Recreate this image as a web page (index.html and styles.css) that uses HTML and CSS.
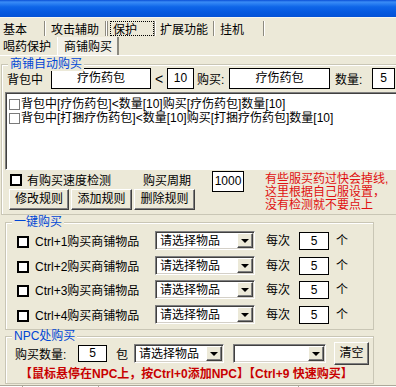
FILE: index.html
```html
<!DOCTYPE html>
<html lang="zh-CN">
<head>
  <meta charset="UTF-8" />
  <title>商铺购买</title>
  <link rel="stylesheet" href="styles.css">
</head>
<body>
  <div class="titlebar"></div>

  <div class="tabs">
    <span class="tab t1">基本</span>
    <span class="tab t2">攻击辅助</span>
    <span class="tab t3 on"><span class="focus">保护</span></span>
    <span class="tab t4">扩展功能</span>
    <span class="tab t5">挂机</span>
  </div>

  <div class="subtabs">
    <span class="sub s1">喝药保护</span>
    <span class="sub s2 on">商铺购买</span>
  </div>

  <!-- 商铺自动购买 -->
  <div class="group g-shop">
    <span class="legend">商铺自动购买</span>
    <div class="rule-row">
      <span class="lbl w-bag">背包中</span>
      <span class="edit w-item">疗伤药包</span>
      <span class="lbl w-lt">&lt;</span>
      <span class="edit w-num">10</span>
      <span class="lbl w-buy">购买:</span>
      <span class="edit w-item2">疗伤药包</span>
      <span class="lbl w-cnt">数量:</span>
      <span class="edit w-cnt-in">5</span>
    </div>

    <div class="list">
      <div class="list-item"><span class="lchk"></span>背包中[疗伤药包]&lt;数量[10]购买[疗伤药包]数量[10]</div>
      <div class="list-item"><span class="lchk"></span>背包中[打捆疗伤药包]&lt;数量[10]购买[打捆疗伤药包]数量[10]</div>
    </div>

    <div class="opts">
      <div class="opts-left">
        <div class="speed-row">
          <span class="check-wrap"><span class="chk"></span>有购买速度检测</span>
          <span class="lbl w-period">购买周期</span>
          <span class="edit w-period-in">1000</span>
        </div>
        <div class="btns">
          <span class="btn b1">修改规则</span>
          <span class="btn b2">添加规则</span>
          <span class="btn b3">删除规则</span>
        </div>
      </div>
      <div class="warn">
        <div>有些服买药过快会掉线,</div>
        <div>这里根据自己服设置，</div>
        <div>没有检测就不要点上</div>
      </div>
    </div>
  </div>

  <!-- 一键购买 -->
  <div class="group g-hotkey">
    <span class="legend">一键购买</span>
    <div class="hk-row">
      <span class="chk"></span><span class="hk-lbl">Ctrl+1购买商铺物品</span>
      <span class="combo w-hk"><span class="val">请选择物品</span><span class="arrow"></span></span>
      <span class="lbl w-each">每次</span><span class="edit w-each-in">5</span><span class="lbl unit">个</span>
    </div>
    <div class="hk-row">
      <span class="chk"></span><span class="hk-lbl">Ctrl+2购买商铺物品</span>
      <span class="combo w-hk"><span class="val">请选择物品</span><span class="arrow"></span></span>
      <span class="lbl w-each">每次</span><span class="edit w-each-in">5</span><span class="lbl unit">个</span>
    </div>
    <div class="hk-row">
      <span class="chk"></span><span class="hk-lbl">Ctrl+3购买商铺物品</span>
      <span class="combo w-hk"><span class="val">请选择物品</span><span class="arrow"></span></span>
      <span class="lbl w-each">每次</span><span class="edit w-each-in">5</span><span class="lbl unit">个</span>
    </div>
    <div class="hk-row">
      <span class="chk"></span><span class="hk-lbl">Ctrl+4购买商铺物品</span>
      <span class="combo w-hk"><span class="val">请选择物品</span><span class="arrow"></span></span>
      <span class="lbl w-each">每次</span><span class="edit w-each-in">5</span><span class="lbl unit">个</span>
    </div>
  </div>

  <!-- NPC处购买 -->
  <div class="group g-npc">
    <span class="legend">NPC处购买</span>
    <div class="npc-row">
      <span class="lbl w-qty">购买数量:</span>
      <span class="edit w-qty-in">5</span>
      <span class="lbl w-pack">包</span>
      <span class="combo w-npc1"><span class="val">请选择物品</span><span class="arrow"></span></span>
      <span class="combo w-npc2"><span class="val"></span><span class="arrow"></span></span>
      <span class="btn b-clear">清空</span>
    </div>
    <div class="npc-tip">【鼠标悬停在NPC上，按Ctrl+0添加NPC】【Ctrl+9 快速购买】</div>
  </div>

  <div class="statusbar">
    <span class="pane p1"></span>
    <span class="pane p2"></span>
    <span class="pane p3"></span>
  </div>
</body>
</html>
```

FILE: styles.css
```css
* { margin: 0; padding: 0; box-sizing: border-box; }
html, body {
  width: 396px;
  height: 387px;
  overflow: hidden;
}
body {
  background: #ECE9D8;
  font-family: "Liberation Sans", "Noto Sans CJK SC", sans-serif;
  font-size: 12px;
  color: #000;
}

/* window title */
.titlebar {
  height: 18px;
  background: linear-gradient(to bottom, #0a4fd6 0%, #3a8cf6 12%, #2a7ff2 22%, #0f66e8 40%, #0559e0 70%, #0352d6 100%);
  border-bottom: 1px solid #f6f5ef;
}

/* top tabs */
.tabs {
  display: flex;
  height: 19px;
}
.tab {
  margin-top: 3px;
  height: 15px;
  line-height: 14px;
  padding: 2px 0 0 3px;
  border-right: 1px solid #8d8b80;
  box-shadow: 1px 0 #fff;
}
.t1 { width: 45px; margin-right: 1px; }
.t2 { width: 60px; margin-right: 1px; padding-left: 5px; }
.t3 { width: 48px; margin-right: 1px; padding: 0 0 0 2px; border-left: 1px solid #8d8b80; }
.t4 { width: 58px; margin-right: 2px; padding-left: 4px; }
.t5 { width: 48px; padding-left: 4px; }
.focus {
  display: block;
  width: 44px;
  height: 15px;
  line-height: 14px;
  padding: 1px 0 0 2px;
  border: 1px dotted #000;
}

/* sub tabs */
.subtabs {
  display: flex;
  height: 19px;
  border-bottom: 1px solid #fff;
}
.sub {
  height: 18px;
  line-height: 20px;
  padding-left: 3px;
}
.s1 { width: 57px; }
.s2 {
  width: 62px;
  padding-left: 6px;
  background: #f2f0e6;
  border-left: 1px solid #fff;
  border-right: 2px solid #8d8b80;
}

/* group boxes */
.group {
  position: relative;
  border: 1px solid #c9c6b5;
  box-shadow: inset 1px 1px #fff;
}
.legend {
  position: absolute;
  top: -7px;
  left: 6px;
  padding: 0 2px;
  line-height: 13px;
  background: #ECE9D8;
  color: #0046d5;
}
.g-shop {
  margin: 8px -10px 0 1px;
  padding: 3px 0 2px 0;
}
.g-hotkey {
  margin: 7px 0 0 5px;
  width: 369px;
  padding-top: 8px;
}
.g-npc {
  margin: 6px 0 0 5px;
  width: 369px;
  padding: 5px 0 2px 0;
}

/* common widgets */
.lbl { white-space: nowrap; }
.edit {
  display: block;
  height: 21px;
  line-height: 19px;
  background: #fff;
  border: 1px solid #000;
  text-align: center;
}
.chk {
  display: block;
  width: 12px;
  height: 12px;
  border: 2px solid #000;
  background: #fff;
  flex: none;
}
.btn {
  display: block;
  height: 21px;
  line-height: 19px;
  text-align: center;
  background: #ECE9D8;
  border: 1px solid;
  border-color: #fff #404040 #404040 #fff;
  box-shadow: inset -1px -1px #808080;
}
.combo {
  display: flex;
  height: 19px;
  background: #fff;
  border: 1px solid;
  border-color: #808080 #fff #fff #808080;
  box-shadow: inset 1px 1px #404040, inset -1px -1px #d4d0c8;
  padding: 1px;
}
.combo .val {
  flex: 1;
  padding-left: 3px;
  line-height: 16px;
  overflow: hidden;
  white-space: nowrap;
}
.combo .arrow {
  width: 16px;
  display: flex;
  align-items: center;
  justify-content: center;
  background: #ECE9D8;
  border: 1px solid;
  border-color: #fff #404040 #404040 #fff;
  box-shadow: inset -1px -1px #808080;
}
.combo .arrow::after {
  content: "";
  border-left: 4px solid transparent;
  border-right: 4px solid transparent;
  border-top: 4px solid #000;
  margin-top: 1px;
}

/* rule row */
.rule-row {
  display: flex;
  align-items: center;
  height: 21px;
  padding-left: 5px;
}
.w-bag { width: 44px; }
.w-item { width: 100px; }
.w-lt { width: 16px; padding-left: 4px; font-size: 14px; }
.w-num { width: 27px; }
.w-buy { width: 35px; padding-left: 3px; }
.w-item2 { width: 101px; }
.w-cnt { width: 42px; padding-left: 5px; }
.w-cnt-in { width: 23px; }

/* rule list */
.list {
  margin: 3px 0 0 3px;
  height: 78px;
  background: #fff;
  border: 1px solid;
  border-color: #808080 #fff #fff #808080;
  box-shadow: inset 1px 1px #404040;
  padding: 4px 0 0 3px;
}
.list-item {
  display: flex;
  align-items: center;
  height: 14px;
  line-height: 13px;
  white-space: nowrap;
}
.lchk {
  width: 11px;
  height: 11px;
  border: 1px solid #7a7a7a;
  margin-right: 1px;
  flex: none;
}

/* options */
.opts {
  display: flex;
  padding-left: 6px;
}
.opts-left { width: 257px; }
.speed-row {
  display: flex;
  align-items: flex-start;
  height: 19px;
}
.check-wrap {
  display: flex;
  align-items: center;
  width: 135px;
  height: 19px;
  padding-left: 2px;
}
.check-wrap .chk { margin-right: 5px; }
.w-period { width: 69px; line-height: 19px; padding-top: 2px; }
.w-period-in { width: 32px; margin-top: 1px; height: 21px; }
.btns {
  display: flex;
  gap: 2px;
  padding-left: 1px;
}
.b1 { width: 60px; }
.b2, .b3 { width: 61px; }
.warn {
  padding-top: 3px;
  color: #e01010;
  white-space: nowrap;
}
.warn div {
  height: 13px;
  line-height: 13px;
}

/* hotkeys */
.hk-row {
  display: flex;
  align-items: flex-start;
  height: 24px;
  padding-left: 11px;
}
.hk-row:nth-child(3), .hk-row:nth-child(5) { margin-top: 1px; }
.hk-row .chk { margin-top: 5px; }
.hk-lbl {
  width: 126px;
  padding-left: 6px;
  line-height: 22px;
  white-space: nowrap;
}
.w-hk { width: 100px; }
.w-each { width: 44px; padding-left: 11px; line-height: 20px; }
.w-each-in { width: 30px; height: 18px; line-height: 16px; margin-top: 1px; }
.unit { padding-left: 7px; line-height: 20px; }

/* npc */
.npc-row {
  display: flex;
  align-items: center;
  height: 23px;
  padding-left: 9px;
}
.w-qty { width: 63px; }
.w-qty-in { width: 29px; height: 17px; line-height: 15px; }
.w-pack { width: 27px; padding-left: 9px; }
.w-npc1 { width: 90px; }
.w-npc2 { width: 93px; margin-left: 9px; }
.b-clear { width: 35px; height: 23px; line-height: 21px; margin-left: 8px; }
.npc-tip {
  margin-top: 2px;
  padding-left: 14px;
  line-height: 14px;
  color: #c80000;
  font-weight: bold;
  white-space: nowrap;
}

/* status bar */
.statusbar {
  display: flex;
  margin-top: 1px;
  height: 6px;
  border-top: 1px solid #aca899;
  box-shadow: inset 0 1px #fff;
}
.pane {
  height: 6px;
  border-right: 1px solid #aca899;
  box-shadow: 1px 0 #fff;
}
.p1 { width: 23px; }
.p2 { width: 76px; }
.p3 { width: 200px; }
```
